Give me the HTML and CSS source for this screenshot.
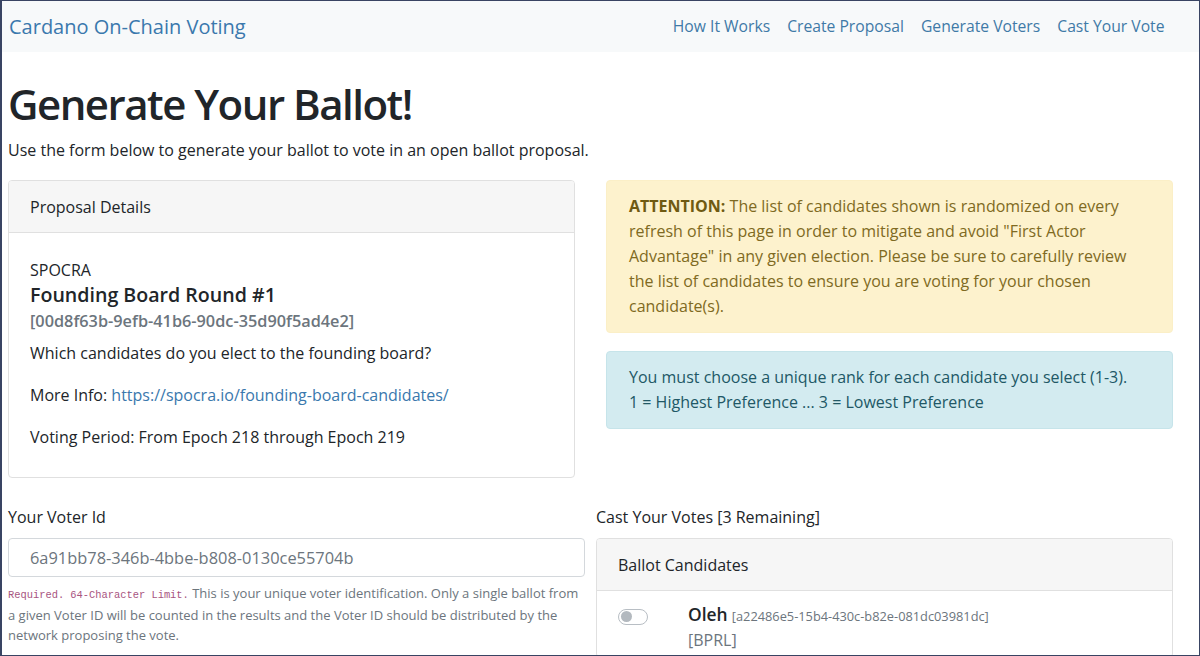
FILE: index.html
```html
<!DOCTYPE html>
<html lang="en">
<head>
<meta charset="utf-8">
<title>Cardano On-Chain Voting</title>
<link rel="stylesheet" href="styles.css">
</head>
<body>
<div class="frame">
  <nav class="navbar">
    <a class="brand" href="#">Cardano On-Chain Voting</a>
    <ul class="nav">
      <li><a href="#">How It Works</a></li>
      <li><a href="#">Create Proposal</a></li>
      <li><a href="#">Generate Voters</a></li>
      <li><a href="#">Cast Your Vote</a></li>
    </ul>
  </nav>
  <main class="container">
    <h1 class="title">Generate Your Ballot!</h1>
    <p class="lead">Use the form below to generate your ballot to vote in an open ballot proposal.</p>

    <div class="row-top">
      <section class="card">
        <div class="card-header">Proposal Details</div>
        <div class="card-body">
          <div class="org">SPOCRA</div>
          <div class="prop-title">Founding Board Round #1</div>
          <div class="prop-id">[00d8f63b-9efb-41b6-90dc-35d90f5ad4e2]</div>
          <p class="q">Which candidates do you elect to the founding board?</p>
          <p class="info">More Info: <a href="#">https://spocra.io/founding-board-candidates/</a></p>
          <p class="info">Voting Period: From Epoch 218 through Epoch 219</p>
        </div>
      </section>
      <div class="alerts">
        <div class="alert alert-warning"><strong>ATTENTION:</strong> The list of candidates shown is randomized on every refresh of this page in order to mitigate and avoid "First Actor Advantage" in any given election. Please be sure to carefully review the list of candidates to ensure you are voting for your chosen candidate(s).</div>
        <div class="alert alert-info">You must choose a unique rank for each candidate you select (1-3).<br>1 = Highest Preference ... 3 = Lowest Preference</div>
      </div>
    </div>

    <div class="row-bottom">
      <div class="col">
        <label class="label" for="voter">Your Voter Id</label>
        <input class="input" id="voter" type="text" placeholder="6a91bb78-346b-4bbe-b808-0130ce55704b">
        <p class="help"><code>Required. 64-Character Limit.</code> This is your unique voter identification. Only a single ballot from a given Voter ID will be counted in the results and the Voter ID should be distributed by the network proposing the vote.</p>
      </div>
      <div class="col">
        <div class="label">Cast Your Votes [3 Remaining]</div>
        <section class="card">
          <div class="card-header">Ballot Candidates</div>
          <div class="cand">
            <span class="switch"><span class="knob"></span></span>
            <div class="cand-info">
              <div class="cand-name"><strong>Oleh</strong> <span class="cand-id">[a22486e5-15b4-430c-b82e-081dc03981dc]</span></div>
              <div class="cand-tag">[BPRL]</div>
            </div>
          </div>
        </section>
      </div>
    </div>
  </main>
</div>
</body>
</html>
```
FILE: styles.css
```css
* { box-sizing: border-box; }
html, body { margin: 0; padding: 0; }
body {
  font-family: "Open Sans", "Noto Sans", sans-serif;
  font-size: 16px;
  line-height: 25px;
  color: #212529;
  background: #fff;
}
a { color: #3a78ad; text-decoration: none; }

.frame {
  width: 1200px;
  height: 656px;
  border: 1px solid #394463;
  border-left-width: 2px;
  overflow: hidden;
  background: #fff;
}

.navbar {
  height: 51px;
  background: #f7f9fa;
  display: flex;
  align-items: center;
  justify-content: space-between;
  padding: 0 26px 0 7px;
}
.brand { font-size: 20px; color: #3a78ad; }
.nav { display: flex; list-style: none; margin: 0; padding: 0; }
.nav a { display: block; padding: 0 8.5px; font-size: 15.7px; color: #3f7aa7; }

.container { width: 1165px; margin-left: 6px; }

.title {
  font-size: 42px;
  font-weight: 600;
  line-height: 52px;
  margin: 26px 0 0;
  letter-spacing: -1.5px;
}
.lead { margin: 8px 0 0; }

.row-top {
  display: grid;
  grid-template-columns: 567px 567px;
  column-gap: 31px;
  align-items: start;
  margin-top: 17px;
}

.card {
  border: 1px solid #e0e0e0;
  border-radius: 4px;
  background: #fff;
  overflow: hidden;
}
.card-header {
  background: #f6f6f6;
  border-bottom: 1px solid #e0e0e0;
  padding: 14px 21px 11px;
  height: 52px;
}
.card-body { padding: 25px 21px 27px; }
.org { line-height: 25px; }
.prop-title { font-size: 19.6px; font-weight: 600; line-height: 24px; }
.prop-id { color: #6c757d; font-weight: 600; font-size: 16.3px; line-height: 27px; margin-top: 1px; }
.q { margin: 6px 0 0; }
.info { margin: 17px 0 0; }

.alerts { display: flex; flex-direction: column; gap: 18px; }
.alert {
  border: 1px solid transparent;
  border-radius: 4px;
  padding: 13px 44px 13px 22px;
}
.alert-warning { background: #fdf2cd; border-color: #fbefc7; color: #7f6a22; }
.alert-warning strong { color: #6f5a12; font-weight: 700; }
.alert-info { background: #d3ebf0; border-color: #c6e4ea; color: #215866; }

.row-bottom {
  display: grid;
  grid-template-columns: 577px 577px;
  column-gap: 11px;
  margin-top: 27px;
}
.label { display: block; margin-bottom: 7.5px; }
.input {
  display: block;
  width: 100%;
  height: 39px;
  border: 1px solid #d4d8dc;
  border-radius: 4px;
  padding: 0 21px;
  font-family: inherit;
  font-size: 16.4px;
  color: #495057;
}
.input::placeholder { color: #6c757d; opacity: 1; }
.help {
  margin: 6px 0 0;
  font-size: 13px;
  line-height: 20px;
  color: #6c757d;
}
.help code {
  font-family: "Liberation Mono", "DejaVu Sans Mono", monospace;
  font-size: 10.4px;
  color: #a8547f;
}

.cand {
  display: flex;
  align-items: flex-start;
  padding: 12px 21px 4px;
}
.switch {
  width: 30px;
  height: 16px;
  margin-top: 6px;
  border: 1px solid #b8bec4;
  border-radius: 8px;
  background: #fff;
  display: flex;
  align-items: center;
  padding-left: 2px;
  flex: none;
}
.knob { width: 11px; height: 11px; border-radius: 50%; background: #b3b9bf; }
.cand-info { margin-left: 40px; }
.cand-name { line-height: 22px; }
.cand-name strong { font-size: 17.4px; font-weight: 600; }
.cand-id { font-size: 12.8px; color: #6c757d; }
.cand-tag { color: #6c757d; margin-top: 1px; }
```
